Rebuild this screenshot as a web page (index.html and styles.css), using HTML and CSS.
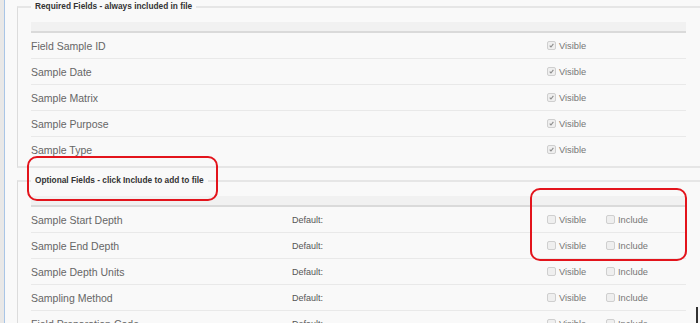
FILE: index.html
```html
<!DOCTYPE html>
<html lang="en">
<head>
    <meta charset="UTF-8">
    <title>Export File Fields</title>
    <link rel="stylesheet" href="styles.css">
</head>
<body>
    <div class="panel">
        <fieldset class="group">
            <legend>Required Fields - always included in file</legend>
            <div class="head"></div>
            <div class="row">
                <span class="name">Field Sample ID</span><span></span>
                <label class="opt"><span class="cb on"><svg viewBox="0 0 9 9"><path d="M2.2 4.8 L3.8 6.4 L6.9 2.4"/></svg></span>Visible</label>
            </div>
            <div class="row">
                <span class="name">Sample Date</span><span></span>
                <label class="opt"><span class="cb on"><svg viewBox="0 0 9 9"><path d="M2.2 4.8 L3.8 6.4 L6.9 2.4"/></svg></span>Visible</label>
            </div>
            <div class="row">
                <span class="name">Sample Matrix</span><span></span>
                <label class="opt"><span class="cb on"><svg viewBox="0 0 9 9"><path d="M2.2 4.8 L3.8 6.4 L6.9 2.4"/></svg></span>Visible</label>
            </div>
            <div class="row">
                <span class="name">Sample Purpose</span><span></span>
                <label class="opt"><span class="cb on"><svg viewBox="0 0 9 9"><path d="M2.2 4.8 L3.8 6.4 L6.9 2.4"/></svg></span>Visible</label>
            </div>
            <div class="row">
                <span class="name">Sample Type</span><span></span>
                <label class="opt"><span class="cb on"><svg viewBox="0 0 9 9"><path d="M2.2 4.8 L3.8 6.4 L6.9 2.4"/></svg></span>Visible</label>
            </div>
        </fieldset>

        <fieldset class="group second">
            <legend>Optional Fields - click Include to add to file</legend>
            <div class="head"></div>
            <div class="row">
                <span class="name">Sample Start Depth</span><span class="def">Default:</span>
                <label class="opt"><span class="cb"></span>Visible</label>
                <label class="opt"><span class="cb"></span>Include</label>
            </div>
            <div class="row">
                <span class="name">Sample End Depth</span><span class="def">Default:</span>
                <label class="opt"><span class="cb"></span>Visible</label>
                <label class="opt"><span class="cb"></span>Include</label>
            </div>
            <div class="row">
                <span class="name">Sample Depth Units</span><span class="def">Default:</span>
                <label class="opt"><span class="cb"></span>Visible</label>
                <label class="opt"><span class="cb"></span>Include</label>
            </div>
            <div class="row">
                <span class="name">Sampling Method</span><span class="def">Default:</span>
                <label class="opt"><span class="cb"></span>Visible</label>
                <label class="opt"><span class="cb"></span>Include</label>
            </div>
            <div class="row">
                <span class="name">Field Preparation Code</span><span class="def">Default:</span>
                <label class="opt"><span class="cb"></span>Visible</label>
                <label class="opt"><span class="cb"></span>Include</label>
            </div>
        </fieldset>

        <!-- red annotation marks -->
        <div class="mark mark-legend"></div>
        <div class="mark mark-checks"></div>
        <div class="grip"></div>
    </div>
</body>
</html>
```

FILE: styles.css
```css
html, body {
    height: 100%;
}
body {
    margin: 0;
    background: #e9e8e7;
    font-family: "Liberation Sans", Arial, sans-serif;
    overflow: hidden;
}
.panel {
    position: relative;
    height: 100%;
    margin-left: 4px;
    border-left: 1px solid #a9c5e6;
    background: #f9f9f9;
    overflow: hidden;
}
.group {
    margin: 1px -40px 0 12px;
    padding: 10px 53px 4px 13px;
    border: 1px solid #dcdcdc;
    border-top: 2px solid #e6e6e6;
    border-bottom: 2px solid #e6e6e6;
    min-width: 0;
}
.group.second {
    margin-top: 7px;
}
.group legend {
    padding: 0 4px;
    font-size: 8.3px;
    font-weight: bold;
    line-height: 11px;
    color: #333;
}
.head {
    height: 9px;
    background: #f1f1f1;
    border-bottom: 2px solid #dadada;
}
.row {
    display: grid;
    grid-template-columns: 261px 255px 59px 1fr;
    align-items: center;
    height: 25px;
    border-bottom: 1px solid #e9e9e9;
}
.row:last-child {
    border-bottom: none;
}
.name {
    font-size: 10.5px;
    color: #666;
}
.def {
    font-size: 9px;
    color: #555;
}
.opt {
    display: flex;
    align-items: center;
    gap: 3px;
    font-size: 9.3px;
    color: #777;
}
.cb {
    box-sizing: border-box;
    width: 9px;
    height: 9px;
    border: 1px solid #cfcfcf;
    border-radius: 2px;
    background: #efefef;
}
.cb svg {
    display: block;
    width: 7px;
    height: 7px;
    fill: none;
    stroke: #8a8a8a;
    stroke-width: 1.4;
}
.mark {
    position: absolute;
    border: 2px solid #e3141c;
    border-radius: 10px;
}
.mark-legend {
    left: 22px;
    top: 156px;
    width: 187px;
    height: 41px;
}
.mark-checks {
    left: 525px;
    top: 188px;
    width: 153px;
    height: 69px;
}
.grip {
    position: absolute;
    right: 2px;
    top: 307px;
    width: 2px;
    height: 16px;
    background: #333;
}
```
